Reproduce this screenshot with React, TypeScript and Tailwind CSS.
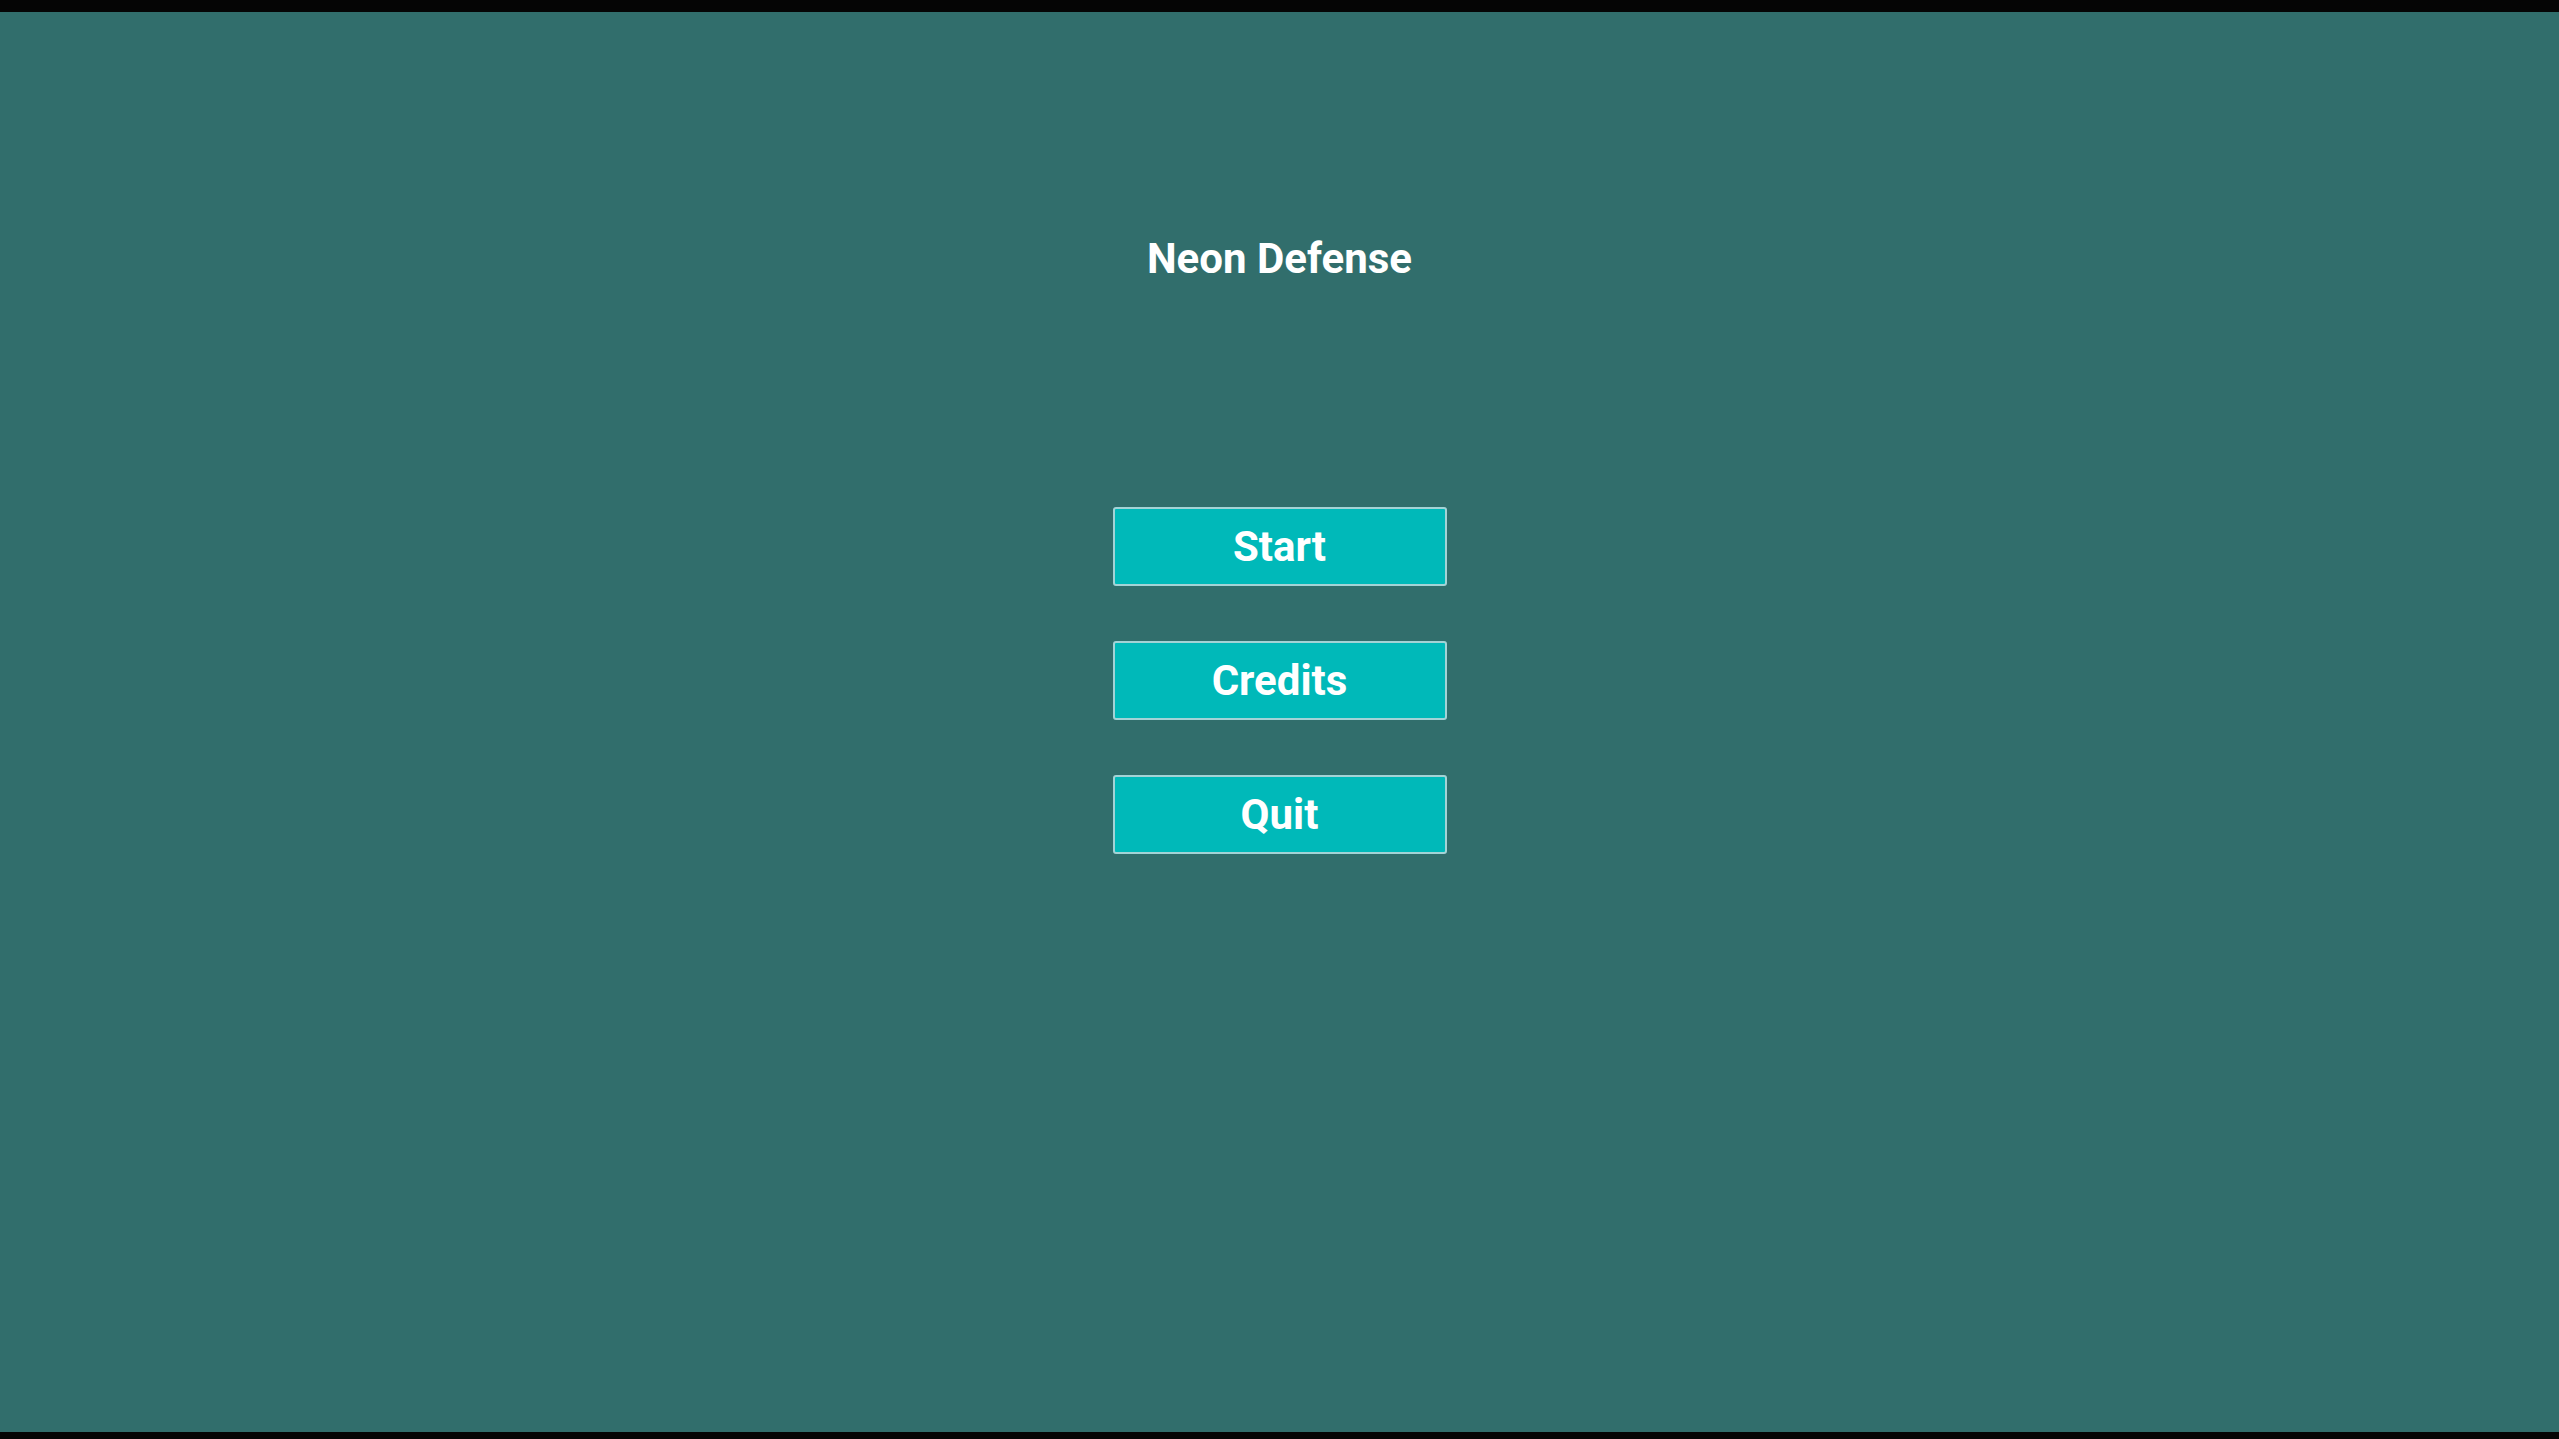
import React from "react";

export default function App() {
  const items = ["Start", "Credits", "Quit"];
  return (
    <div className="flex h-[1439px] w-full flex-col bg-black" style={{ fontFamily: "Roboto, 'Liberation Sans', sans-serif" }}>
      <div className="h-[12px] shrink-0 bg-[#050505]" />
      <main className="flex flex-1 flex-col items-center bg-[#316e6c] pt-[226px]">
        <h1 className="text-[42px] font-bold leading-none text-white">Neon Defense</h1>
        <div className="mt-[227px] flex flex-col gap-[55px]">
          {items.map((t) => (
            <button
              key={t}
              className="flex h-[79px] w-[334px] items-center justify-center rounded-[3px] border-2 border-[#a3d3d6] bg-[#00b9b9] text-[42px] font-bold leading-none text-white"
            >
              {t}
            </button>
          ))}
        </div>
      </main>
      <div className="h-[7px] shrink-0 bg-[#050505]" />
    </div>
  );
}
